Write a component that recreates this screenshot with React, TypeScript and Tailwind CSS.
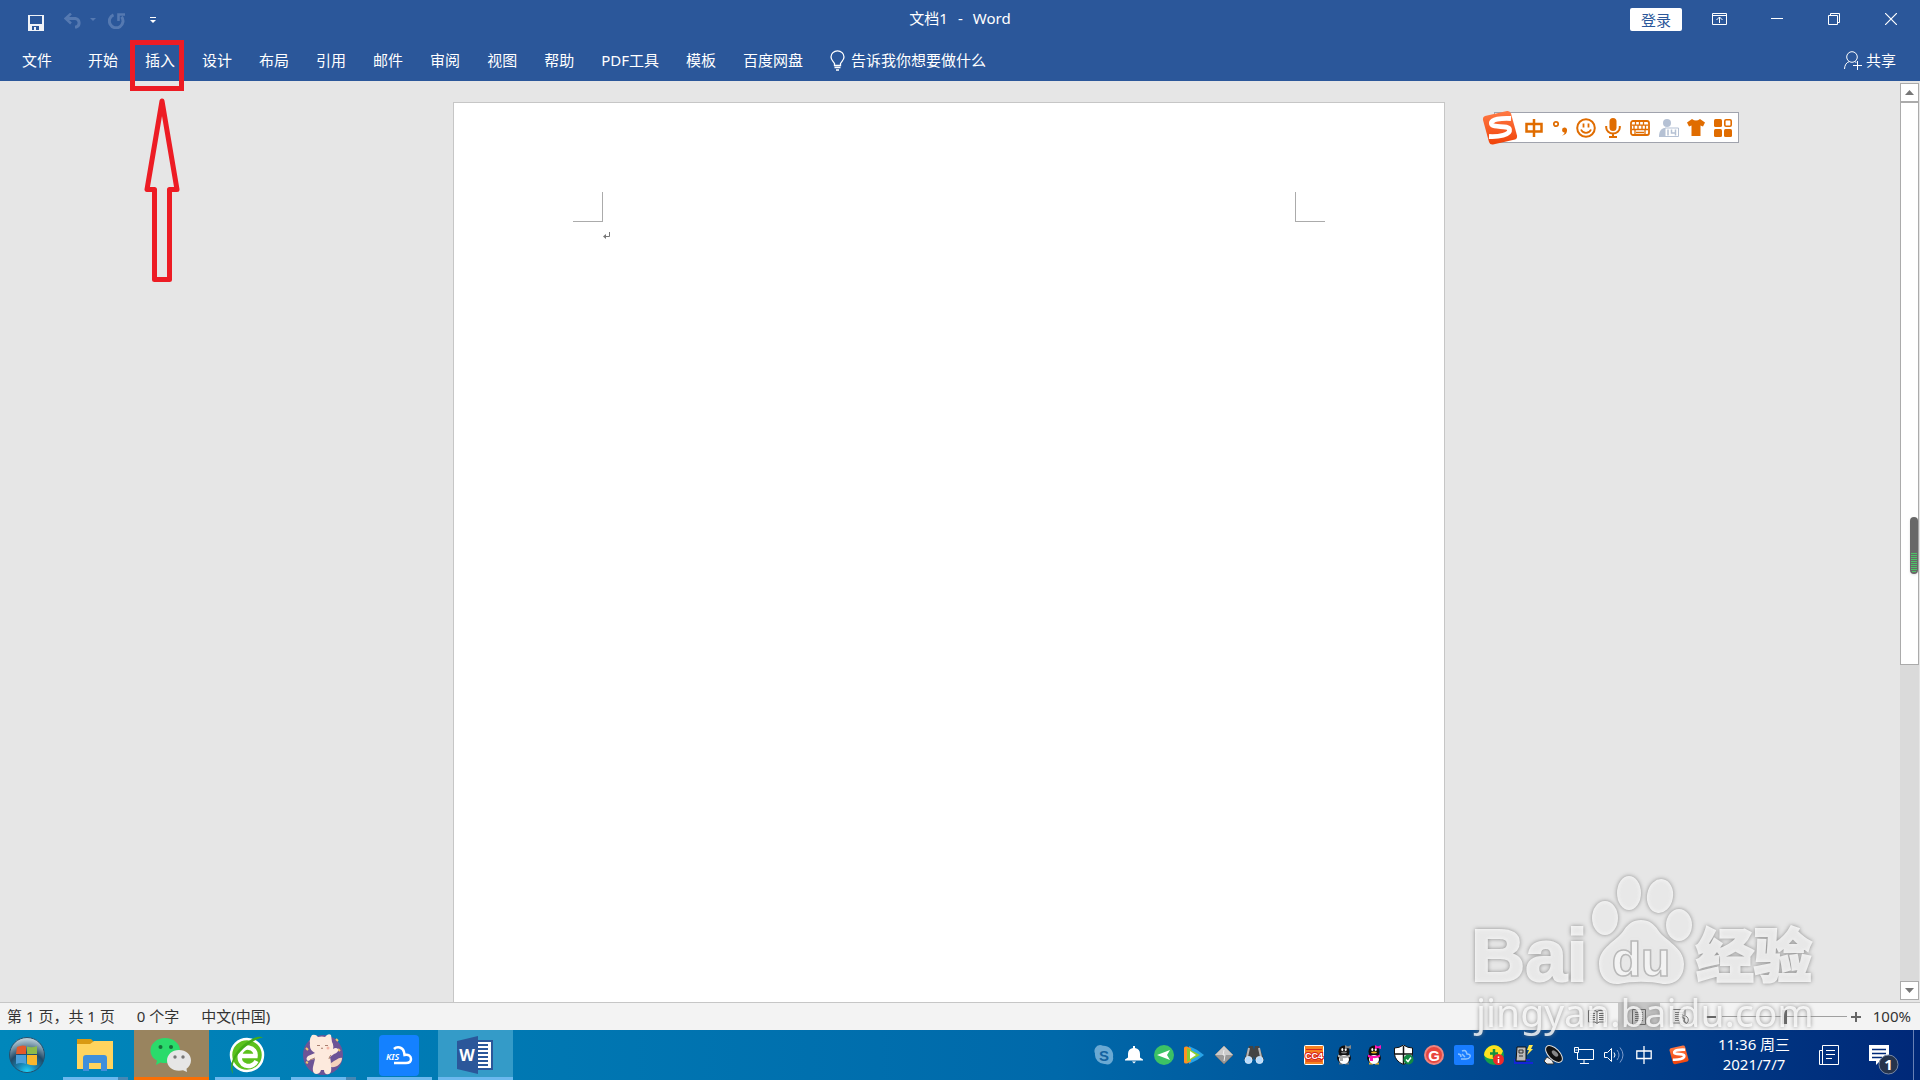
import type { ReactNode } from "react";

const tabs = ["开始", "插入", "设计", "布局", "引用", "邮件", "审阅", "视图", "帮助", "PDF工具", "模板", "百度网盘"];

function Svg({ w, h, children, className }: { w: number; h: number; children: ReactNode; className?: string }) {
  return (
    <svg width={w} height={h} viewBox={`0 0 ${w} ${h}`} fill="none" className={className} aria-hidden="true">
      {children}
    </svg>
  );
}

function TitleBar() {
  return (
    <header className="grid h-10 grid-cols-[1fr_auto_1fr]">
      <div className="flex h-8 items-end gap-5 pl-7">
        <button aria-label="保存" className="h-[19px]">
          <Svg w={16} h={16}>
            <path d="M0 0h16v16H0z" fill="#f0f3f8" />
            <path d="M2 1h12v8H2zM4 11h7v4H8v-3H6v3H4z" fill="#2b579a" />
          </Svg>
        </button>
        <button aria-label="撤消" className="flex h-[19px] items-start gap-2">
          <Svg w={18} h={16}>
            <path d="M2 5.500h9.500a4.500 4.500 0 0 1 1 8.500H11" stroke="#5579b1" strokeWidth="3" />
            <path d="M7 .500 1.500 5.500 7 10.500" stroke="#5579b1" strokeWidth="2.500" />
          </Svg>
          <Svg w={6} h={8}>
            <path d="M0 5h6l-3 3z" fill="#5579b1" />
          </Svg>
        </button>
        <button aria-label="恢复" className="-ml-2 flex h-[19px] items-start">
          <Svg w={18} h={16}>
            <path d="M5.500 1.800a6.800 6.800 0 1 0 8 2" stroke="#5579b1" strokeWidth="3" />
            <path d="M10.500 8V1.500H17" stroke="#5579b1" strokeWidth="2.600" />
          </Svg>
        </button>
        <button aria-label="自定义快速访问工具栏" className="ml-1 flex h-[19px] items-start">
          <Svg w={6} h={10}>
            <path d="M0 4.500h6" stroke="#fff" />
            <path d="M0 7h6l-3 3z" fill="#fff" />
          </Svg>
        </button>
      </div>
      <h1 className="flex gap-[10px] pt-1 text-[15px] leading-7">
        <span>文档1</span>
        <span>-</span>
        <span>Word</span>
      </h1>
      <div className="flex justify-end pr-px">
        <button className="mt-2 mr-[9px] h-[23px] w-13 rounded-xs bg-white text-[15px] leading-5 text-[#2b579a]">登录</button>
        <button aria-label="功能区显示选项" className="flex h-[38px] w-[57px] items-center justify-center">
          <Svg w={15} h={12}>
            <path d="M.5.5h14v11H.5zM.5 2.500h14M7.500 10V4M4.500 7l3-3 3 3" stroke="#fff" />
          </Svg>
        </button>
        <button aria-label="最小化" className="flex h-[38px] w-[57px] items-center justify-center">
          <Svg w={12} h={12}>
            <path d="M0 5.500h12" stroke="#fff" />
          </Svg>
        </button>
        <button aria-label="向下还原" className="flex h-[38px] w-[57px] items-center justify-center">
          <Svg w={12} h={12}>
            <path d="M.5 2.500h9v9h-9zM2.500 2.500v-2h9v9h-2" stroke="#fff" />
          </Svg>
        </button>
        <button aria-label="关闭" className="flex h-[38px] w-[57px] items-center justify-center">
          <Svg w={12} h={12}>
            <path d="m0 0 12 12M12 0 0 12" stroke="#fff" strokeWidth="1.200" />
          </Svg>
        </button>
      </div>
    </header>
  );
}

function Ribbon() {
  return (
    <nav className="flex h-[41px] items-center pr-6 pl-[22px] text-[15px]">
      <button className="mr-9">文件</button>
      <div className="flex gap-[27px]">
        {tabs.map((tab) => (
          <button key={tab}>{tab}</button>
        ))}
        <button className="flex items-center gap-[6px]">
          <Svg w={15} h={21}>
            <path
              d="M4.500 15.500v-2C3.500 11.500 1 10 1 7a6.500 6.200 0 0 1 13 0c0 3-2.500 4.500-3.500 6.500v2zM4.500 17.500h6M6 20h3"
              stroke="#fff"
              strokeWidth="1.300"
            />
          </Svg>
          告诉我你想要做什么
        </button>
      </div>
      <button className="ml-auto flex items-center gap-1">
        <Svg w={18} h={19}>
          <circle cx="8" cy="6" r="5.300" stroke="#fff" />
          <path d="M.5 18c.2-4 2-6.500 4.500-7.300M11 10.700l1.300.8M13.500 10v9M9 14.500h9" stroke="#fff" />
        </Svg>
        共享
      </button>
    </nav>
  );
}

function SogouMark({ size }: { size: number }) {
  return (
    <svg width={size} height={size} viewBox="0 0 36 36" fill="none" aria-hidden="true">
      <defs>
        <linearGradient id="sogou" x1="0" y1="0" x2="0" y2="1">
          <stop offset="0" stopColor="#ff7a45" />
          <stop offset="1" stopColor="#f04208" />
        </linearGradient>
      </defs>
      <path d="M3 6 25 1q3-.5 4 2.500l6 22q.5 3-2 4L11 34.500q-3 .5-4-2.500L1 10q-.5-3 2-4Z" fill="url(#sogou)" />
      <path
        d="M29 8.500C20 8 8 9 9.500 14c1.500 4.500 17 .5 18 5.500 1 5.500-11 7.500-20.500 7"
        stroke="#fff"
        strokeWidth="4.800"
      />
    </svg>
  );
}

function SogouBar() {
  return (
    <div className="absolute top-[31px] right-[181px] flex h-[31px] w-[245px] items-center justify-between border border-[#a0a3ad] bg-white pr-[6px] pl-[30px] text-[#e06c00]">
      <span className="absolute -top-[3px] -left-[13px]">
        <SogouMark size={36} />
      </span>
      <Svg w={18} h={18}>
        <path d="M1.500 5h15v7.500h-15zM9 0v18" stroke="currentColor" strokeWidth="2.500" />
      </Svg>
      <Svg w={16} h={16}>
        <circle cx="4" cy="4" r="2.200" stroke="currentColor" strokeWidth="1.700" />
        <path d="M10 15.500c2-1 2.500-2 2.500-3a2.500 2.500 0 1 1 2.500-3c.3 3.500-1.500 5.500-5 6Z" fill="currentColor" />
      </Svg>
      <Svg w={20} h={20}>
        <circle cx="10" cy="10" r="8.800" stroke="currentColor" strokeWidth="2" />
        <path d="M7.500 5.500v4M12.500 5.500v4M5 11.500c2 4.500 8 4.500 10 0" stroke="currentColor" strokeWidth="1.800" />
      </Svg>
      <Svg w={16} h={20}>
        <rect x="4.500" width="7" height="13" rx="3.500" fill="currentColor" />
        <path d="M1.200 8v1.500a6.800 6 0 0 0 13.600 0V8M8 15.500V19M4 19h8" stroke="currentColor" strokeWidth="2" />
      </Svg>
      <Svg w={20} h={16}>
        <rect x="1" y="1" width="18" height="14" rx="2" stroke="currentColor" strokeWidth="1.800" />
        <path d="M2 5.200h16M2 9.500h16" stroke="currentColor" strokeWidth="1.300" />
        <path d="M5.500 2v3M9.500 2v3M13.500 2v3M4 5v4M8 5v4M12 5v4M15.500 5v4M5 9v5M15 9v5M6 12.500h8" stroke="currentColor" strokeWidth="1.300" />
      </Svg>
      <Svg w={20} h={18}>
        <circle cx="8" cy="4" r="4" fill="#b5c1d4" />
        <path d="M0 18c0-6 2-8 5-9h6v9z" fill="#b5c1d4" />
        <path d="M6 9h13.500v8.500H6z" fill="#fff" stroke="#b5c1d4" />
        <path d="M9 10.500v6M12.500 10.500v3.500h4M16.500 10.500v6" stroke="#b5c1d4" strokeWidth="1.500" />
      </Svg>
      <Svg w={18} h={17}>
        <path d="M5 0q4 3 8 0l5 3.500-2 4-2.500-1V17h-9V6.500L2 7.500l-2-4z" fill="currentColor" />
      </Svg>
      <Svg w={18} h={18}>
        <rect x="0" y="0" width="8" height="8" rx="1.500" fill="currentColor" />
        <rect x="10.800" y=".8" width="6.400" height="6.400" rx="1.200" stroke="currentColor" strokeWidth="1.600" />
        <rect x="0" y="10" width="8" height="8" rx="1.500" fill="currentColor" />
        <rect x="10" y="10" width="8" height="8" rx="1.500" fill="currentColor" />
      </Svg>
    </div>
  );
}

function Editor() {
  return (
    <main className="relative flex min-h-0 flex-1 bg-[#e6e6e6]">
      <div className="flex flex-1 justify-center pt-[21px] pr-[2px]">
        <article className="w-full max-w-[992px] border border-b-0 border-[#c6c6c6] bg-white px-[119px] pt-[89px]">
          <div className="flex justify-between">
            <div className="size-[30px] border-r border-b border-[#ababab]" />
            <div className="size-[30px] border-b border-l border-[#ababab]" />
          </div>
          <Svg w={8} h={8} className="mt-[10px] ml-[30px]">
            <path d="M6.500 0v4.500H1" stroke="#777" />
            <path d="M0 4.500 3 2v5z" fill="#777" />
          </Svg>
        </article>
      </div>
      <div className="flex w-5 flex-col pt-[2px] pr-px pb-[2px]">
        <button aria-label="向上滚动" className="flex h-[19px] items-center justify-center border border-[#ababab] bg-white">
          <Svg w={9} h={5}>
            <path d="M0 5h9L4.500 0z" fill="#777" />
          </Svg>
        </button>
        <div className="flex-1 bg-[#dadada]">
          <div className="h-[64%] border border-[#ababab] bg-white" />
        </div>
        <button aria-label="向下滚动" className="flex h-[19px] items-center justify-center border border-[#ababab] bg-white">
          <Svg w={9} h={5}>
            <path d="M0 0h9L4.500 5z" fill="#777" />
          </Svg>
        </button>
      </div>
      <div className="absolute top-[436px] right-[2px] h-[57px] w-2 rounded bg-[#686868] px-px pt-9 shadow">
        <Svg w={6} h={20}>
          <path d="M0 .5h6M0 2.500h6M0 4.500h6M0 6.500h6M0 8.500h6M0 10.500h6M0 12.500h6M0 14.500h6M0 16.500h6M1 18.500h4" stroke="#4cc466" />
        </Svg>
      </div>
      <SogouBar />
    </main>
  );
}

function StatusBar() {
  return (
    <footer className="flex h-7 items-center border-t border-[#c6c6c6] bg-[#f3f3f3] pr-[9px] pl-[7px] text-[15px] text-[#333]">
      <div className="flex items-center gap-[22px] pb-px">
        <span>第 1 页，共 1 页</span>
        <span>0 个字</span>
        <span>中文(中国)</span>
      </div>
      <div className="ml-auto flex h-full items-center">
        <button aria-label="阅读视图" className="flex h-full w-[42px] items-center justify-center">
          <Svg w={18} h={15}>
            <path d="M.5 1.500H7l2 1 2-1h6.500V13H11l-2 1.500L7 13H.5zM9 2v12" stroke="#666" />
            <path d="M2 4.500h5M2 6.500h5M2 8.500h5M2 10.500h5M11 4.500h5M11 6.500h5M11 8.500h5M11 10.500h5" stroke="#666" />
          </Svg>
        </button>
        <button aria-label="页面视图" className="flex h-full w-[42px] items-center justify-center bg-[#c6c6c6]">
          <Svg w={14} h={16}>
            <path d="M.5.5h13v15H.5zM3 3.500h8M3 5.500h8M3 7.500h8M3 9.500h8M3 11.500h8" stroke="#666" />
          </Svg>
        </button>
        <button aria-label="Web 版式视图" className="flex h-full w-[42px] items-center justify-center">
          <Svg w={17} h={16}>
            <path d="M8 14H.5V.5H13V6M3 3.500h8M3 5.500h8M3 7.500h5M3 9.500h4M3 11.500h4" stroke="#777" />
            <circle cx="12" cy="11" r="4.300" stroke="#777" />
            <path d="m9.500 8 3 1.500-.5 3 2 1.500" stroke="#777" strokeWidth="1.500" />
          </Svg>
        </button>
        <button aria-label="缩小" className="ml-1 w-3">
          <Svg w={10} h={10}>
            <path d="M0 5h10" stroke="#666" strokeWidth="2" />
          </Svg>
        </button>
        <input
          type="range"
          aria-label="缩放"
          min={10}
          max={190}
          defaultValue={100}
          className="mx-1 h-px w-[125px] appearance-none bg-[#a0a0a0] [&::-webkit-slider-thumb]:h-[14px] [&::-webkit-slider-thumb]:w-[5px] [&::-webkit-slider-thumb]:appearance-none [&::-webkit-slider-thumb]:bg-[#666]"
        />
        <button aria-label="放大">
          <Svg w={10} h={10}>
            <path d="M0 5h10M5 0v10" stroke="#666" strokeWidth="2" />
          </Svg>
        </button>
        <span className="ml-3 pb-px">100%</span>
      </div>
    </footer>
  );
}

function StartIcon() {
  return (
    <Svg w={36} h={38}>
      <defs>
        <radialGradient id="orb" cx=".5" cy="1" r=".95">
          <stop offset="0" stopColor="#20d8ff" />
          <stop offset=".3" stopColor="#1685b4" />
          <stop offset=".6" stopColor="#204a68" />
          <stop offset="1" stopColor="#b5cad5" />
        </radialGradient>
      </defs>
      <circle cx="18" cy="19" r="17.500" fill="url(#orb)" stroke="#25506d" />
      <path d="M8 11q5-2.500 9-1v8H7z" fill="#e2592b" />
      <path d="M18 10.500q5 1.800 10-.5v8H18z" fill="#8dbb4a" />
      <path d="M7 19h10v9q-5-2-10 0z" fill="#4b9fd9" />
      <path d="M18 19h10v10q-5 1-10-1z" fill="#f7b72d" />
    </Svg>
  );
}

function ExplorerIcon() {
  return (
    <Svg w={36} h={34}>
      <path d="M0 1h14l3 3-3 4H0z" fill="#d99a12" />
      <path d="M0 6h13l4-3h19v28H0z" fill="#ffd45e" />
      <path d="M6 33V20q0-3 3-3h18q3 0 3 3v13h-6v-8H12v8z" fill="#3f8fdb" />
    </Svg>
  );
}

function WechatIcon() {
  return (
    <Svg w={42} h={36}>
      <path d="M15 1c8.500 0 15 5.500 15 12.500S23.500 26 15 26c-1.500 0-3-.2-4.500-.6L6 28l1-4.500C3 21.500.5 18 .5 13.500.5 6.500 7 1 15 1Z" fill="#2adb6b" />
      <circle cx="10.500" cy="10" r="2" fill="#16703a" />
      <circle cx="21" cy="10" r="2" fill="#16703a" />
      <path d="M29 13c7 0 12 4.500 12 10.500 0 3.500-2 6.500-4.500 8.200L37 35l-4-1.800c-1.200.3-2.500.5-4 .5-7 0-12-4.500-12-10.200S22 13 29 13Z" fill="#e6e6e6" />
      <circle cx="25" cy="20" r="1.700" fill="#777" />
      <circle cx="33" cy="20" r="1.700" fill="#777" />
    </Svg>
  );
}

function BrowserIcon() {
  return (
    <Svg w={38} h={40}>
      <circle cx="19" cy="20" r="16" fill="#5cc11d" stroke="#fff" strokeWidth="2.500" />
      <path d="M28.500 26c-2 4-7 6-11 4.500-4.500-1.500-6.500-6-5.500-11 1-4.500 5-7.500 9-6.800 4.500.8 7 4.300 6.500 8.300H12" stroke="#fff" strokeWidth="4.500" />
      <path d="M5 39C-1 30 8 12 24 4c5-2.500 9-3 11-1.500C30 2 12 13 6 26c-2 5-2 9-1 13Z" fill="#43ad16" />
    </Svg>
  );
}

function CatIcon() {
  return (
    <Svg w={40} h={42}>
      <circle cx="20" cy="21" r="20" fill="#6d5496" />
      <path d="m3 14 2 2M33 5l2 2M35 15l2 2M3 28l2 1" stroke="#f0c36a" strokeWidth="2" />
      <path d="M28 33c5 1 11-3 11-9-3-1-7 3-11 5Z" fill="#f6d2bd" />
      <path
        d="M9 1q4-1 6 2 4-1 7 0 3-4 6-2l1 7q2 3 1 7 3-2 5 0 1 3-4 5l-4 3q1 4 1 8 1 8-2 9-5 1-5-4h-3q-1 4-5 4-4-1-3-7l2-8q-4 0-7 2-3-2 0-5l7-3q-6-3-5-10Q6 5 9 1Z"
        fill="#fdeadd"
      />
      <path d="M14 11.500h3M22 11.500h3M18 14q1 1 2 0M12 24q-3 1-5 2M28 21q-2 2-2 4" stroke="#a87f6e" />
      <circle cx="25" cy="14" r="1.500" fill="#f5b5a5" />
    </Svg>
  );
}

function KisIcon() {
  return (
    <Svg w={40} h={42}>
      <rect y="1" width="40" height="41" rx="4" fill="#1481ff" />
      <text x="7" y="26" fill="#fff" fontFamily="Noto Sans, sans-serif" fontWeight="600" fontStyle="italic" fontSize="9">
        KIS
      </text>
      <path d="M15 15c3-3 9-2 10 3l.5 3c4-1 6.500 1 6.500 4 0 2.500-2 4-5 4H15" stroke="#fff" strokeWidth="2.500" />
    </Svg>
  );
}

function WordIcon() {
  return (
    <Svg w={36} h={38}>
      <path d="M18 5h17v28H18z" fill="#fff" stroke="#2b579a" strokeWidth="2" />
      <path d="M21 9h10M21 13h10M21 17h10M21 21h10M21 25h10M21 29h10" stroke="#2b579a" strokeWidth="1.800" />
      <path d="M0 5 21 0v38L0 33z" fill="#2b579a" />
      <text x="10" y="25" textAnchor="middle" fill="#fff" fontFamily="Noto Sans, sans-serif" fontWeight="700" fontSize="16">
        W
      </text>
    </Svg>
  );
}

const apps = [
  { name: "文件资源管理器", icon: <ExplorerIcon />, cell: "", line: "mx-[5px] bg-[#6bb8ee]", stacked: true },
  { name: "微信", icon: <WechatIcon />, cell: "bg-[#99845f]", line: "bg-[#f96f04]", stacked: false },
  { name: "360安全浏览器", icon: <BrowserIcon />, cell: "", line: "mx-[5px] bg-[#6bb8ee]", stacked: false },
  { name: "聊天", icon: <CatIcon />, cell: "", line: "mx-[5px] bg-[#6bb8ee]", stacked: true },
  { name: "KIS", icon: <KisIcon />, cell: "", line: "mx-[5px] bg-[#6bb8ee]", stacked: false },
  { name: "Word", icon: <WordIcon />, cell: "bg-[#349bc8]", line: "bg-[#6bb8ee]", stacked: false },
];

function Penguin({ face, scarf, bow }: { face: string; scarf: string; bow: string }) {
  return (
    <Svg w={20} h={20}>
      <path d="M5 18.500h4M11 18.500h4" stroke={face} strokeWidth="2" />
      <ellipse cx="10" cy="13" rx="7" ry="5.500" fill="#111" />
      <ellipse cx="10" cy="6.500" rx="5.500" ry="6" fill="#111" />
      <ellipse cx="10" cy="14.500" rx="5" ry="4.500" fill="#fff" />
      <ellipse cx="8.300" cy="4.500" rx="1" ry="1.500" fill="#fff" />
      <ellipse cx="11.700" cy="4.500" rx="1" ry="1.500" fill="#fff" />
      <ellipse cx="10" cy="7.500" rx="3" ry="1" fill={face} />
      <path d="M4 9.500q6 3 12 0V12q-4 1.500-7 1v3H6v-3.500L4 12Z" fill={scarf} />
      <path d="m11 0 3 1.500L17 0v4l-3-1-3 1Z" fill={bow} />
    </Svg>
  );
}

const trayIcons = [
  {
    name: "Skype",
    icon: (
      <Svg w={20} h={20}>
        <path d="M6 0a6 6 0 0 1 3 .8A9.500 9.500 0 0 1 19 12a6 6 0 0 1-8 7A9.500 9.500 0 0 1 1 8.500 6 6 0 0 1 6 0Z" fill="#6aa9d3" />
        <text x="10" y="15.500" textAnchor="middle" fill="#13629f" fontFamily="Liberation Sans, sans-serif" fontWeight="700" fontSize="15">S</text>
      </Svg>
    ),
  },
  {
    name: "通知铃",
    icon: (
      <Svg w={18} h={18}>
        <path d="M0 14.500h18v-1l-3-2V8a6 6 0 0 0-5-6V0H8v2a6 6 0 0 0-5 6v3.500l-3 2zM7 15.500h4l-2 2z" fill="#fff" />
      </Svg>
    ),
  },
  {
    name: "飞邮",
    icon: (
      <Svg w={20} h={20}>
        <circle cx="10" cy="10" r="10" fill="#3cc265" />
        <path d="m3 10 13-5-3 5 3 5z" fill="#fff" />
      </Svg>
    ),
  },
  {
    name: "腾讯视频",
    icon: (
      <Svg w={20} h={18}>
        <path d="M5 0q8 3 15 9-7 6-15 9z" fill="#28a4e8" />
        <path d="M0 2q0-2 3-1.500l4 2v13l-4 2Q0 18 0 16z" fill="#ff9122" />
        <path d="m3 2 13 7-13 7z" fill="#8ace30" />
        <path d="m6 5 6 4-6 4z" fill="#fff" />
      </Svg>
    ),
  },
  {
    name: "闪电",
    icon: (
      <Svg w={20} h={20}>
        <path d="m10 1 9 9-9 9-9-9z" fill="#999" stroke="#777" />
        <path d="m10 1 9 9H1z" fill="#ccc" />
        <path d="m10 5-1 5h2l-1 6" stroke="#eee" />
      </Svg>
    ),
  },
  {
    name: "望远镜",
    icon: (
      <Svg w={20} h={18}>
        <path d="M5 0h4l1 4 1-4h4l5 14h-9l-1-4-1 4H0z" fill="#444" />
        <path d="m5 2-2 9M15 2l2 9" stroke="#b5b5b5" strokeWidth="2" />
        <circle cx="4.500" cy="14" r="3.500" fill="#b6dcff" stroke="#d6e6f5" />
        <circle cx="15.500" cy="14" r="3.500" fill="#b6dcff" stroke="#d6e6f5" />
      </Svg>
    ),
  },
  { name: "", icon: null },
  {
    name: "CC",
    icon: (
      <Svg w={20} h={20}>
        <rect x=".5" y=".5" width="19" height="19" rx="1" fill="#f58220" stroke="#fff" />
        <path d="M2 4.500h16M2 16h16" stroke="#d8231c" />
        <text x="10" y="14" textAnchor="middle" fill="#fff" stroke="#d8231c" strokeWidth="2" paintOrder="stroke" fontFamily="Liberation Sans, sans-serif" fontWeight="700" fontSize="9">CC4</text>
      </Svg>
    ),
  },
  { name: "QQ 离线", icon: <Penguin face="#777" scarf="#aaa" bow="#888" /> },
  { name: "QQ", icon: <Penguin face="#e9ad20" scarf="#ff14b4" bow="#ff14b4" /> },
  {
    name: "安全中心",
    icon: (
      <Svg w={20} h={20}>
        <path d="M9.500 0q4 3 9 3v6q-1 7-9 10.500Q1 16 .5 9V3q5 0 9-3Z" fill="#fff" stroke="#111" />
        <path d="M9.500 1v18M1 9h17" stroke="#111" strokeWidth="1.500" />
        <circle cx="14.500" cy="14.500" r="5" fill="#128a43" />
        <path d="m12 14.500 2 2 3-4" stroke="#fff" strokeWidth="1.500" />
      </Svg>
    ),
  },
  {
    name: "G",
    icon: (
      <Svg w={20} h={20}>
        <circle cx="10" cy="10" r="9" fill="#e8473f" stroke="#ee8580" strokeWidth="2" />
        <text x="10" y="15.500" textAnchor="middle" fill="#fff" fontFamily="Liberation Sans, sans-serif" fontWeight="700" fontSize="15">G</text>
      </Svg>
    ),
  },
  {
    name: "云",
    icon: (
      <Svg w={20} h={20}>
        <rect width="20" height="20" rx="2" fill="#187cff" />
        <path d="M8 6q4-2 5 3 4 0 3 3-1 2-4 2H7M4 9q3 0 3 3M8 9l3 3" stroke="#8cc3ff" strokeWidth="1.500" />
      </Svg>
    ),
  },
  {
    name: "360",
    icon: (
      <Svg w={20} h={20}>
        <circle cx="10" cy="10" r="10" fill="#16a04a" />
        <path d="M0 10A10 10 0 0 1 19 6q-3 8-10 8T0 10Z" fill="#ffe11f" />
        <path d="M10 4v9M6 8.500h8" stroke="#14903f" strokeWidth="2.500" />
        <circle cx="14.500" cy="14.500" r="5.500" fill="#f02a2a" />
        <path d="M14.500 11.500v1.500M14.500 14v4" stroke="#fff" strokeWidth="1.500" />
      </Svg>
    ),
  },
  {
    name: "加密狗",
    icon: (
      <Svg w={20} h={20}>
        <path d="M3 2h9v14H2z" fill="#bbb" stroke="#111" />
        <path d="M5 5h4v3H5zM5 11h4" stroke="#333" />
        <path d="m15 0-2 5h2l-2 5 6-6h-2l2-4z" fill="#ffe74a" />
        <path d="M0 14v4h19M12 15h4" stroke="#1524d8" strokeWidth="2" />
      </Svg>
    ),
  },
  {
    name: "声卡",
    icon: (
      <Svg w={20} h={20}>
        <path d="M3 12 0 16l3 3h7l-2-4z" fill="#eee" stroke="#333" />
        <ellipse cx="10" cy="9" rx="5.500" ry="10.500" transform="rotate(-45 10 9)" fill="#111" stroke="#ddd" />
        <ellipse cx="11" cy="8.500" rx="2" ry="4" transform="rotate(-45 11 8.500)" fill="#888" />
      </Svg>
    ),
  },
  {
    name: "网络",
    icon: (
      <Svg w={20} h={17}>
        <path d="M5 2.500h14.500v10H3.500V6M10 13v3M6 16.500h9M.5.5h4v5h-4zM1.500 3h2" stroke="#fff" />
      </Svg>
    ),
  },
  {
    name: "音量",
    icon: (
      <Svg w={20} h={18}>
        <path d="M.5 6.500h3l4-4v13l-4-4h-3zM10 6.500q2 2.500 0 5" stroke="#fff" />
        <path d="M13 4q4 5 0 10M16 1.500q6 7.500 0 15" stroke="#7d9bcb" />
      </Svg>
    ),
  },
  {
    name: "输入法",
    icon: (
      <Svg w={16} h={18}>
        <path d="M.8 5h14.400v7.500H.8zM8 0v18" stroke="#fff" strokeWidth="1.300" />
      </Svg>
    ),
  },
];

function Taskbar() {
  return (
    <div className="flex h-[50px] bg-linear-to-r from-[#0087bb] via-[#0069aa] via-55% to-[#002878]">
      <button aria-label="开始" className="flex w-[54px] items-center justify-center">
        <StartIcon />
      </button>
      <div className="ml-1 flex gap-px">
        {apps.map((app) => (
          <button key={app.name} aria-label={app.name} className={`flex w-[75px] flex-col ${app.cell}`}>
            <span className="flex flex-1 items-center justify-center self-stretch pt-[2px] pr-px">{app.icon}</span>
            <span className={`flex h-[3px] justify-end self-stretch ${app.line}`}>
              {app.stacked && <span className="w-[10px] bg-[#4588b5]" />}
            </span>
          </button>
        ))}
      </div>
      <div className="ml-auto flex">
        {trayIcons.map((item, i) =>
          item.icon ? (
            <button key={i} aria-label={item.name} className="flex w-[30px] items-center justify-center">
              {item.icon}
            </button>
          ) : (
            <span key={i} className="w-[30px]" />
          ),
        )}
        <button aria-label="搜狗输入法" className="flex w-10 items-center justify-center">
          <SogouMark size={20} />
        </button>
        <button className="w-[110px] pb-[2px] text-center text-[15px] leading-5 text-white">
          11:36 周三
          <br />
          2021/7/7
        </button>
        <button aria-label="资讯" className="flex w-10 items-center justify-center">
          <Svg w={20} h={20}>
            <path d="M3.500.5h16v19H.5v-14h3zM3.500 5v14M7 5.500h9M7 9.500h9M7 13.500h6" stroke="#fff" />
          </Svg>
        </button>
        <button aria-label="操作中心" className="flex w-[65px] justify-center border-r border-[#6780b5] pt-[15px] pl-[5px]">
          <Svg w={30} h={30}>
            <path d="M0 0h20v16h-9l-4 4v-4H0z" fill="#fff" />
            <path d="M3 4.500h14M3 8.500h14M3 12.500h10" stroke="#002878" strokeWidth="1.500" />
            <circle cx="19.500" cy="19.500" r="9.500" fill="#26344c" stroke="#7888a4" />
            <text x="19.500" y="25" textAnchor="middle" fill="#fff" fontFamily="Noto Sans, sans-serif" fontWeight="700" fontSize="15">1</text>
          </Svg>
        </button>
        <span className="w-[6px]" />
      </div>
    </div>
  );
}

function Watermark() {
  return (
    <svg
      width="350"
      height="180"
      viewBox="0 0 350 180"
      className="pointer-events-none absolute right-[100px] bottom-[35px] drop-shadow-[0_0_2px_#777]"
      aria-hidden="true"
    >
      <g fill="#fff" fillOpacity=".8">
        <ellipse cx="135" cy="53" rx="13" ry="17" />
        <ellipse cx="159" cy="28" rx="12" ry="17" />
        <ellipse cx="190" cy="31" rx="13" ry="17" transform="rotate(10 190 31)" />
        <ellipse cx="209" cy="60" rx="13" ry="16" />
        <path d="M171 55c8 0 13 4 17 10 7 11 26 17 26 34 0 14-9 21-21 20-14-3-30-3-44 0-12 1-20-7-20-20 0-17 17-22 25-34 4-6 9-10 17-10Z" />
      </g>
      <g opacity=".8" fill="#fff" stroke="#fff">
        <text x="1" y="116" fontFamily="Liberation Sans, sans-serif" fontWeight="700" fontSize="75" strokeWidth="2">
          Bai
        </text>
        <text x="226" y="112" fontFamily="Noto Sans CJK SC, sans-serif" fontWeight="900" fontSize="58" strokeWidth="2">
          经验
        </text>
      </g>
      <text x="6" y="162" fill="#fff" fillOpacity=".8" fontFamily="Noto Sans, sans-serif" fontSize="39">
        jingyan.baidu.com
      </text>
      <text x="171" y="111" textAnchor="middle" fill="#f3f3f3" stroke="#b8b8b8" strokeWidth="1.500" fontFamily="Liberation Sans, sans-serif" fontWeight="700" fontSize="48">
        du
      </text>
    </svg>
  );
}

export default function App() {
  return (
    <div className="relative flex h-screen flex-col overflow-hidden font-['Noto_Sans','Noto_Sans_CJK_SC',sans-serif]">
      <div className="bg-[#2b579a] text-white">
        <TitleBar />
        <Ribbon />
      </div>
      <Editor />
      <StatusBar />
      <Taskbar />
      <Watermark />
      <div className="absolute top-10 left-[130px] h-[51px] w-[54px] border-5 border-[#ed1c24]" />
      <svg width="36" height="185" viewBox="0 0 36 185" fill="none" className="absolute top-[98px] left-36" aria-hidden="true">
        <path d="M18 3 3 91.500h7.500v90h15v-90H33L18 3Z" stroke="#ed1c24" strokeWidth="5" strokeLinejoin="round" />
      </svg>
    </div>
  );
}
